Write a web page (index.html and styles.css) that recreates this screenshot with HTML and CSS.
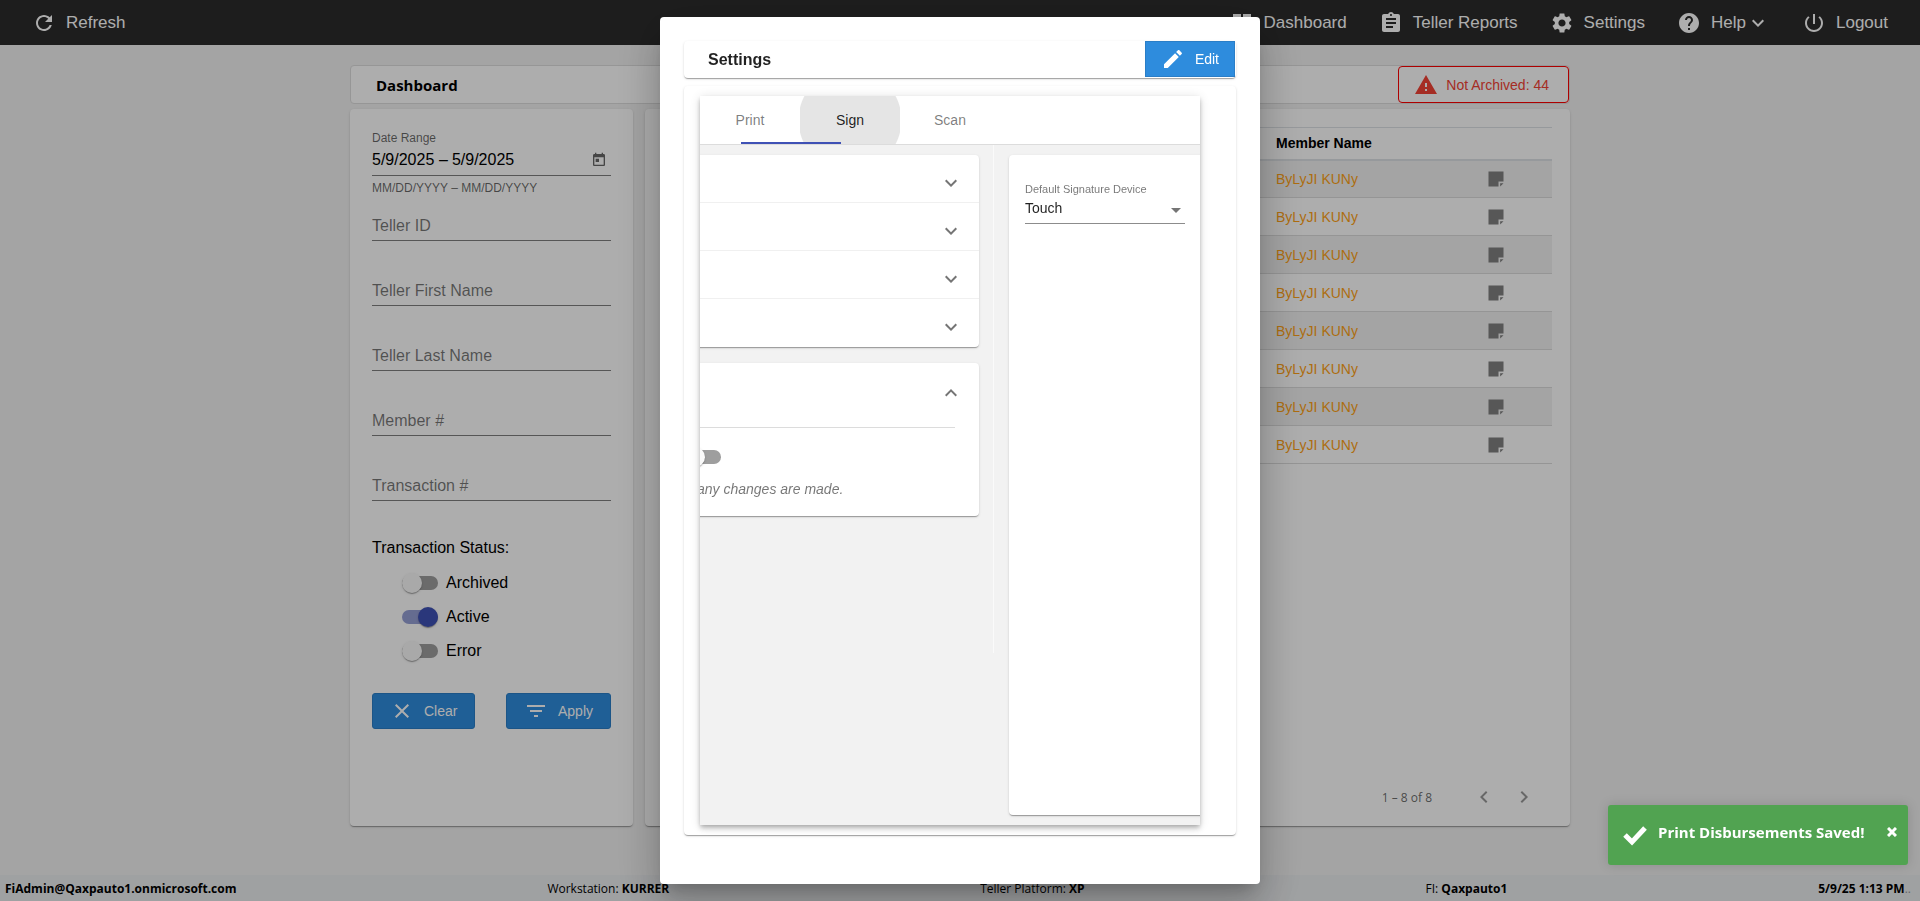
FILE: index.html
```html
<!DOCTYPE html>
<html lang="en">
<head>
  <meta charset="UTF-8" />
  <meta name="viewport" content="width=device-width, initial-scale=1.0" />
  <title>Dashboard</title>
  <link rel="stylesheet" href="styles.css">
</head>
<body>
  <!-- shared icons -->
  <svg class="defs" aria-hidden="true">
    <symbol id="chevron" viewBox="0 0 24 24"><path d="M16.59 8.59L12 13.17 7.41 8.59 6 10l6 6 6-6z"/></symbol>
    <symbol id="note" viewBox="0 0 24 24"><path d="M3 3h18v12h-6v6H3zM17 17h4l-4 4z"/></symbol>
  </svg>

  <header class="navbar">
    <a href="#" class="nav-item">
      <svg class="icon" viewBox="0 0 24 24"><path d="M17.65 6.35C16.2 4.9 14.21 4 12 4c-4.42 0-7.99 3.58-7.99 8s3.57 8 7.99 8c3.73 0 6.84-2.55 7.73-6h-2.08c-.82 2.33-3.04 4-5.65 4-3.31 0-6-2.69-6-6s2.69-6 6-6c1.66 0 3.14.69 4.22 1.78L13 11h7V4l-2.35 2.35z"/></svg>
      Refresh
    </a>
    <nav class="nav-right">
      <a href="#" class="nav-item">
        <svg class="icon" viewBox="0 0 24 24"><path d="M3 13h8V3H3v10zm0 8h8v-6H3v6zm10 0h8V11h-8v10zm0-18v6h8V3h-8z"/></svg>
        Dashboard
      </a>
      <a href="#" class="nav-item">
        <svg class="icon" viewBox="0 0 24 24"><path d="M19 3h-4.18C14.4 1.84 13.3 1 12 1c-1.3 0-2.4.84-2.82 2H5c-1.1 0-2 .9-2 2v14c0 1.1.9 2 2 2h14c1.1 0 2-.9 2-2V5c0-1.1-.9-2-2-2zm-7 0c.55 0 1 .45 1 1s-.45 1-1 1-1-.45-1-1 .45-1 1-1zm2 14H7v-2h7v2zm3-4H7v-2h10v2zm0-4H7V7h10v2z"/></svg>
        Teller Reports
      </a>
      <a href="#" class="nav-item">
        <svg class="icon" viewBox="0 0 24 24"><path d="M19.14 12.94c.04-.3.06-.61.06-.94 0-.32-.02-.64-.07-.94l2.03-1.58c.18-.14.23-.41.12-.61l-1.92-3.32c-.12-.22-.37-.29-.59-.22l-2.39.96c-.5-.38-1.03-.7-1.62-.94l-.36-2.54c-.04-.24-.24-.41-.48-.41h-3.84c-.24 0-.43.17-.47.41l-.36 2.54c-.59.24-1.13.57-1.62.94l-2.39-.96c-.22-.08-.47 0-.59.22L2.74 8.87c-.12.21-.08.47.12.61l2.03 1.58c-.05.3-.09.63-.09.94s.02.64.07.94l-2.03 1.58c-.18.14-.23.41-.12.61l1.92 3.32c.12.22.37.29.59.22l2.39-.96c.5.38 1.03.7 1.62.94l.36 2.54c.05.24.24.41.48.41h3.84c.24 0 .44-.17.47-.41l.36-2.54c.59-.24 1.13-.56 1.62-.94l2.39.96c.22.08.47 0 .59-.22l1.92-3.32c.12-.22.07-.47-.12-.61l-2.01-1.58zM12 15.6c-1.98 0-3.6-1.62-3.6-3.6s1.62-3.6 3.6-3.6 3.6 1.62 3.6 3.6-1.62 3.6-3.6 3.6z"/></svg>
        Settings
      </a>
      <a href="#" class="nav-item">
        <svg class="icon" viewBox="0 0 24 24"><path d="M12 2C6.48 2 2 6.48 2 12s4.48 10 10 10 10-4.48 10-10S17.52 2 12 2zm1 17h-2v-2h2v2zm2.07-7.75l-.9.92C13.45 12.9 13 13.5 13 15h-2v-.5c0-1.1.45-2.1 1.17-2.83l1.24-1.26c.37-.36.59-.86.59-1.41 0-1.1-.9-2-2-2s-2 .9-2 2H8c0-2.21 1.79-4 4-4s4 1.79 4 4c0 .88-.36 1.68-.93 2.25z"/></svg>
        <span class="nav-drop">Help<svg class="icon"><use href="#chevron"/></svg></span>
      </a>
      <a href="#" class="nav-item">
        <svg class="icon" viewBox="0 0 24 24"><path d="M13 3h-2v10h2V3zm4.83 2.17l-1.42 1.42C17.99 7.86 19 9.81 19 12c0 3.87-3.13 7-7 7s-7-3.13-7-7c0-2.19 1.01-4.14 2.58-5.42L6.17 5.17C4.23 6.82 3 9.26 3 12c0 4.97 4.03 9 9 9s9-4.03 9-9c0-2.74-1.23-5.18-3.17-6.83z"/></svg>
        Logout
      </a>
    </nav>
  </header>

  <main class="page">
    <div class="title-bar">
      <h1>Dashboard</h1>
      <button type="button" class="alert-btn">
        <svg class="icon" viewBox="0 0 24 24"><path d="M1 21h22L12 2 1 21zm12-3h-2v-2h2v2zm0-4h-2v-4h2v4z"/></svg>
        Not Archived: 44
      </button>
    </div>

    <div class="columns">
      <form class="card filters">
        <div class="date-field">
          <label for="startDate">Date Range</label>
          <div class="date-row">
            <input type="text" id="startDate" value="5/9/2025" />
            <span>–</span>
            <input type="text" aria-label="End date" value="5/9/2025" />
            <button type="button" class="icon-btn" aria-label="Open calendar">
              <svg viewBox="0 0 24 24"><path d="M19 3h-1V1h-2v2H8V1H6v2H5c-1.11 0-1.99.9-1.99 2L3 19c0 1.1.89 2 2 2h14c1.1 0 2-.9 2-2V5c0-1.1-.9-2-2-2zm0 16H5V8h14v11zM7 10h5v5H7z"/></svg>
            </button>
          </div>
          <p class="hint">MM/DD/YYYY – MM/DD/YYYY</p>
        </div>
        <div class="text-fields">
          <input type="text" aria-label="Teller ID" placeholder="Teller ID" />
          <input type="text" aria-label="Teller First Name" placeholder="Teller First Name" />
          <input type="text" aria-label="Teller Last Name" placeholder="Teller Last Name" />
          <input type="text" aria-label="Member #" placeholder="Member #" />
          <input type="text" aria-label="Transaction #" placeholder="Transaction #" />
        </div>
        <p class="status-title">Transaction Status:</p>
        <div class="status-list">
          <label><input type="checkbox" class="toggle" />Archived</label>
          <label><input type="checkbox" class="toggle" checked />Active</label>
          <label><input type="checkbox" class="toggle" />Error</label>
        </div>
        <div class="filter-buttons">
          <button type="reset" class="btn">
            <svg class="icon" viewBox="0 0 24 24"><path d="M19 6.41L17.59 5 12 10.59 6.41 5 5 6.41 10.59 12 5 17.59 6.41 19 12 13.41 17.59 19 19 17.59 13.41 12z"/></svg>
            Clear
          </button>
          <button type="button" class="btn">
            <svg class="icon" viewBox="0 0 24 24"><path d="M10 18h4v-2h-4v2zM3 6v2h18V6H3zm3 7h12v-2H6v2z"/></svg>
            Apply
          </button>
        </div>
      </form>

      <section class="card results">
        <table>
          <thead>
            <tr><td></td><th class="col-member">Member Name</th><td class="col-note"></td></tr>
          </thead>
          <tbody>
            <tr><td></td><td class="member">ByLyJI KUNy</td><td><svg class="note"><use href="#note"/></svg></td></tr>
            <tr><td></td><td class="member">ByLyJI KUNy</td><td><svg class="note"><use href="#note"/></svg></td></tr>
            <tr><td></td><td class="member">ByLyJI KUNy</td><td><svg class="note"><use href="#note"/></svg></td></tr>
            <tr><td></td><td class="member">ByLyJI KUNy</td><td><svg class="note"><use href="#note"/></svg></td></tr>
            <tr><td></td><td class="member">ByLyJI KUNy</td><td><svg class="note"><use href="#note"/></svg></td></tr>
            <tr><td></td><td class="member">ByLyJI KUNy</td><td><svg class="note"><use href="#note"/></svg></td></tr>
            <tr><td></td><td class="member">ByLyJI KUNy</td><td><svg class="note"><use href="#note"/></svg></td></tr>
            <tr><td></td><td class="member">ByLyJI KUNy</td><td><svg class="note"><use href="#note"/></svg></td></tr>
          </tbody>
        </table>
        <div class="paginator">
          <span>1 – 8 of 8</span>
          <button type="button" aria-label="Previous page"><svg viewBox="0 0 24 24"><path d="M15.41 7.41L14 6l-6 6 6 6 1.41-1.41L10.83 12z"/></svg></button>
          <button type="button" aria-label="Next page"><svg viewBox="0 0 24 24"><path d="M10 6L8.59 7.41 13.17 12l-4.58 4.59L10 18l6-6z"/></svg></button>
        </div>
      </section>
    </div>
  </main>

  <footer class="footer">
    <b>FiAdmin@Qaxpauto1.onmicrosoft.com</b>
    <span>Workstation: <b>KURRER</b></span>
    <span class="platform">Teller Platform: <b>XP</b></span>
    <span>FI: <b>Qaxpauto1</b></span>
    <span><b>5/9/25 1:13 PM</b><span class="dots">..</span></span>
  </footer>

  <div class="backdrop">
    <div class="dialog" role="dialog" aria-labelledby="dialogTitle">
      <div class="dialog-bar">
        <h2 id="dialogTitle">Settings</h2>
        <button type="button" class="btn btn-edit">
          <svg class="icon" viewBox="0 0 24 24"><path d="M3 17.25V21h3.75L17.81 9.94l-3.75-3.75L3 17.25zM20.71 7.04c.39-.39.39-1.02 0-1.41l-2.34-2.34c-.39-.39-1.02-.39-1.41 0l-1.83 1.83 3.75 3.75 1.83-1.83z"/></svg>
          Edit
        </button>
      </div>
      <div class="dialog-card">
        <div class="tab-group">
          <div class="tabs">
            <button type="button" class="tab">Print</button>
            <button type="button" class="tab active">Sign</button>
            <button type="button" class="tab">Scan</button>
            <span class="ink-bar"></span>
          </div>
          <div class="tab-body">
            <div class="tab-page print-page">
              <div class="accordion">
                <button type="button" class="panel-head" aria-label="Expand"><svg class="icon"><use href="#chevron"/></svg></button>
                <button type="button" class="panel-head" aria-label="Expand"><svg class="icon"><use href="#chevron"/></svg></button>
                <button type="button" class="panel-head" aria-label="Expand"><svg class="icon"><use href="#chevron"/></svg></button>
                <button type="button" class="panel-head" aria-label="Expand"><svg class="icon"><use href="#chevron"/></svg></button>
              </div>
              <div class="accordion open">
                <button type="button" class="panel-head" aria-label="Collapse"><svg class="icon"><use href="#chevron"/></svg></button>
                <div class="panel-body">
                  <input type="checkbox" class="toggle" aria-label="Prompt" />
                  <p>any changes are made.</p>
                </div>
              </div>
            </div>
            <div class="tab-page">
              <div class="sign-card">
                <label for="device">Default Signature Device</label>
                <div class="select-wrap">
                  <select id="device">
                    <option>Touch</option>
                  </select>
                  <span class="arrow"></span>
                </div>
              </div>
            </div>
          </div>
        </div>
      </div>
    </div>
  </div>

  <div class="toast" role="alert">
    <svg class="check" viewBox="0 0 24 24"><path d="M2 12l7 7L22 5" /></svg>
    <span>Print Disbursements Saved!</span>
    <button type="button" aria-label="Close"><svg viewBox="0 0 10 10"><path d="M1 1l8 8M9 1l-8 8"/></svg></button>
  </div>
</body>
</html>
```
FILE: styles.css
```css
* {
  box-sizing: border-box;
}
body {
  margin: 0;
  min-height: 100vh;
  display: flex;
  flex-direction: column;
  background: #f2f2f2;
  font-family: "Liberation Sans", Arial, sans-serif;
  font-size: 14px;
  color: #000;
}
h1, h2, p {
  margin: 0;
}
button, input, select {
  font: inherit;
  color: inherit;
}
button {
  cursor: pointer;
}
svg {
  display: block;
  fill: currentColor;
}
.defs {
  display: none;
}
.icon {
  width: 24px;
  height: 24px;
  flex: none;
}

/* top navigation */
.navbar {
  height: 45px;
  padding: 0 32px;
  display: flex;
  align-items: center;
  justify-content: space-between;
  background: #2c2c2c;
}
.nav-right {
  display: flex;
  gap: 32px;
}
.nav-item {
  display: flex;
  align-items: center;
  gap: 10px;
  color: #fff;
  font-size: 17px;
  text-decoration: none;
}
.nav-drop {
  display: flex;
  align-items: center;
}

/* page */
.page {
  flex: 1;
  width: 100%;
  max-width: 1220px;
  margin: 0 auto;
  padding: 20px 0 49px;
  display: flex;
  flex-direction: column;
  gap: 5px;
}
.title-bar {
  height: 39px;
  padding-left: 25px;
  display: flex;
  align-items: center;
  justify-content: space-between;
  background: #fff;
  border: 1px solid #ddd;
  border-radius: 4px;
}
.title-bar h1 {
  font-family: "Open Sans", sans-serif;
  font-size: 15px;
}
.alert-btn {
  height: 37px;
  padding: 0 19px 0 15px;
  display: flex;
  align-items: center;
  gap: 8px;
  background: none;
  border: 1px solid #f00;
  border-radius: 4px;
  color: #f44336;
}
.columns {
  flex: 1;
  display: flex;
  gap: 12px;
}
.card {
  background: #fff;
  border-radius: 4px;
  box-shadow: 0 2px 1px -1px rgba(0,0,0,0.2), 0 1px 1px rgba(0,0,0,0.14), 0 1px 3px rgba(0,0,0,0.12);
}

/* filters */
.filters {
  width: 283px;
  padding: 22px;
}
.filters input[type="text"] {
  padding: 0;
  border: none;
  background: none;
  font-size: 16px;
}
.date-field label, .hint {
  display: block;
  font-size: 12px;
  line-height: 14px;
  color: rgba(0,0,0,0.6);
}
.date-row {
  height: 31px;
  margin-bottom: 5px;
  display: flex;
  align-items: center;
  gap: 4px;
  border-bottom: 1px solid rgba(0,0,0,0.5);
  font-size: 16px;
}
.date-row input {
  width: 63px;
}
.icon-btn {
  margin-left: auto;
  padding: 4px;
  border: none;
  background: none;
  color: #666;
}
.icon-btn svg {
  width: 16px;
  height: 16px;
}
.text-fields {
  padding-top: 16px;
  display: flex;
  flex-direction: column;
  gap: 35px;
}
.filters .text-fields input {
  width: 100%;
  height: 30px;
  border-bottom: 1px solid rgba(0,0,0,0.5);
}
.text-fields input::placeholder {
  color: rgba(0,0,0,0.54);
}
.status-title {
  margin-top: 37px;
  font-size: 16px;
  line-height: 20px;
}
.status-list {
  padding: 8px 0 0 30px;
}
.status-list label {
  height: 34px;
  display: flex;
  align-items: center;
  gap: 8px;
  font-size: 16px;
}
.toggle {
  appearance: none;
  position: relative;
  width: 36px;
  height: 14px;
  margin: 0;
  border-radius: 7px;
  background: #9e9e9e;
}
.toggle::before {
  content: "";
  position: absolute;
  top: -3px;
  left: 0;
  width: 20px;
  height: 20px;
  border-radius: 50%;
  background: #fafafa;
  box-shadow: 0 2px 1px -1px rgba(0,0,0,0.2), 0 1px 1px rgba(0,0,0,0.14), 0 1px 3px rgba(0,0,0,0.12);
}
.toggle:checked {
  background: #969fd5;
}
.toggle:checked::before {
  left: 16px;
  background: #3f51b5;
}
.filter-buttons {
  margin-top: 25px;
  display: flex;
  justify-content: space-between;
}
.btn {
  height: 36px;
  padding: 0 17px;
  display: flex;
  align-items: center;
  gap: 10px;
  background: #2e8cdd;
  border: 1px solid #2a7ec7;
  border-radius: 3px;
  color: #fff;
}

/* results */
.results {
  flex: 1;
  padding: 18px 18px 9px;
  display: flex;
  flex-direction: column;
}
table {
  width: 100%;
  border-collapse: collapse;
  table-layout: fixed;
}
thead tr {
  height: 32px;
  border-top: 1px solid #dee2e6;
  border-bottom: 2px solid #dee2e6;
}
tbody tr {
  height: 38px;
  border-bottom: 1px solid #dcdcdc;
}
tbody tr:nth-child(odd) {
  background: #f2f2f2;
}
th, td {
  padding: 0 10px 0 12px;
  text-align: left;
}
.col-member {
  width: 210px;
}
.col-note {
  width: 78px;
}
.member {
  color: #ffa217;
}
.note {
  width: 20px;
  height: 20px;
  color: #808080;
}
.paginator {
  margin-top: auto;
  padding-right: 8px;
  display: flex;
  align-items: center;
  justify-content: flex-end;
  font-family: "Open Sans", sans-serif;
  font-size: 12px;
  color: rgba(0,0,0,0.6);
}
.paginator span {
  margin-right: 32px;
}
.paginator button {
  width: 40px;
  height: 40px;
  padding: 8px;
  border: none;
  background: none;
  color: rgba(0,0,0,0.4);
}

/* footer */
.footer {
  height: 26px;
  padding: 0 9px 0 5px;
  display: flex;
  align-items: center;
  justify-content: space-between;
  background: #ebedef;
  font-family: "Open Sans", sans-serif;
  font-size: 12px;
}
.platform {
  padding-right: 30px;
}
.dots {
  color: #999;
}

/* settings dialog */
.backdrop {
  position: fixed;
  inset: 0;
  padding: 17px;
  display: flex;
  justify-content: center;
  background: rgba(0,0,0,0.32);
}
.dialog {
  width: 100%;
  max-width: 600px;
  padding: 24px 24px 49px;
  display: flex;
  flex-direction: column;
  gap: 8px;
  background: #fff;
  border-radius: 4px;
  color: rgba(0,0,0,0.87);
  box-shadow: 0 11px 15px -7px rgba(0,0,0,0.2), 0 24px 38px 3px rgba(0,0,0,0.14), 0 9px 46px 8px rgba(0,0,0,0.12);
}
.dialog-bar, .dialog-card, .accordion, .sign-card {
  background: #fff;
  border-radius: 4px;
  box-shadow: 0 2px 1px -1px rgba(0,0,0,0.2), 0 1px 1px rgba(0,0,0,0.14), 0 1px 3px rgba(0,0,0,0.12);
}
.dialog-bar {
  height: 37px;
  padding: 0 1px 0 24px;
  display: flex;
  align-items: flex-start;
  justify-content: space-between;
}
.dialog-bar h2 {
  font-size: 16px;
  line-height: 38px;
}
.btn-edit {
  padding: 0 15px;
  border-radius: 0;
}
.dialog-card {
  flex: 1;
  padding: 10px 36px 10px 16px;
  display: flex;
}
.tab-group {
  flex: 1;
  min-width: 0;
  display: flex;
  flex-direction: column;
  background: #f2f2f2;
  box-shadow: 0 2px 4px -1px rgba(0,0,0,0.2), 0 4px 5px rgba(0,0,0,0.14), 0 1px 10px rgba(0,0,0,0.12);
}
.tabs {
  position: relative;
  height: 49px;
  display: flex;
  background: #fff;
  border-bottom: 1px solid #dcdcdc;
}
.tab {
  width: 100px;
  border: none;
  background: none;
  color: rgba(0,0,0,0.52);
}
.tab.active {
  color: rgba(0,0,0,0.87);
  background: radial-gradient(circle, #e5e5e5 51px, transparent 52px);
}
/* caught halfway between Print and Sign */
.ink-bar {
  position: absolute;
  left: 41px;
  bottom: 0;
  width: 100px;
  height: 2px;
  background: #3f51b5;
}
.tab-body {
  flex: 1;
  display: flex;
  overflow: hidden;
}
.tab-page {
  flex: 0 0 100%;
  padding: 10px 15px;
}
.print-page {
  margin-left: -206px;
  display: flex;
  flex-direction: column;
  gap: 16px;
  background: linear-gradient(#fafafa, #fafafa) no-repeat right top / 1px 508px;
}
.panel-head {
  width: 100%;
  height: 48px;
  padding: 9px 16px 0 0;
  display: flex;
  align-items: center;
  justify-content: flex-end;
  border: none;
  border-bottom: 1px solid #f0f0f0;
  background: none;
  color: #757575;
}
.panel-head:last-child {
  border-bottom-color: transparent;
}
.open .panel-head {
  height: 64px;
  padding: 0 16px 4px 0;
  border: none;
}
.open .panel-head svg {
  transform: rotate(180deg);
}
.panel-body {
  margin: 0 24px;
  padding: 22px 0 17px;
  border-top: 1px solid #dcdcdc;
}
.panel-body .toggle {
  display: block;
  margin-left: 152px;
}
.panel-body p {
  margin-top: 15px;
  padding: 2px 0 2px 164px;
  line-height: 16px;
  font-style: italic;
  color: rgba(0,0,0,0.54);
}
.sign-card {
  height: 100%;
  padding: 27px 16px;
}
.sign-card label {
  display: block;
  font-size: 11px;
  line-height: 14px;
  color: rgba(0,0,0,0.54);
}
.select-wrap {
  position: relative;
  width: 160px;
}
.select-wrap select {
  appearance: none;
  width: 100%;
  height: 28px;
  padding: 0 0 3px;
  border: none;
  border-bottom: 1px solid #8c8c8c;
  border-radius: 0;
  background: none;
}
.arrow {
  position: absolute;
  right: 4px;
  top: 12px;
  border: 5px solid transparent;
  border-top-color: #757575;
  border-bottom: none;
  pointer-events: none;
}

/* toast */
.toast {
  position: fixed;
  right: 12px;
  bottom: 36px;
  width: 300px;
  height: 60px;
  padding: 0 11px 6px 15px;
  display: flex;
  align-items: center;
  background: #51a351;
  border-radius: 3px;
  color: #fff;
  font-family: "Open Sans", sans-serif;
  font-size: 15px;
  font-weight: bold;
  box-shadow: 0 0 12px rgba(0,0,0,0.15);
}
.toast .check {
  width: 24px;
  height: 24px;
  margin: 6px 11px 0 0;
  fill: none;
  stroke: #fff;
  stroke-width: 5;
}
.toast button {
  width: 10px;
  height: 10px;
  margin-left: auto;
  padding: 0;
  border: none;
  background: none;
}
.toast button path {
  stroke: #fff;
  stroke-width: 3;
}
```
